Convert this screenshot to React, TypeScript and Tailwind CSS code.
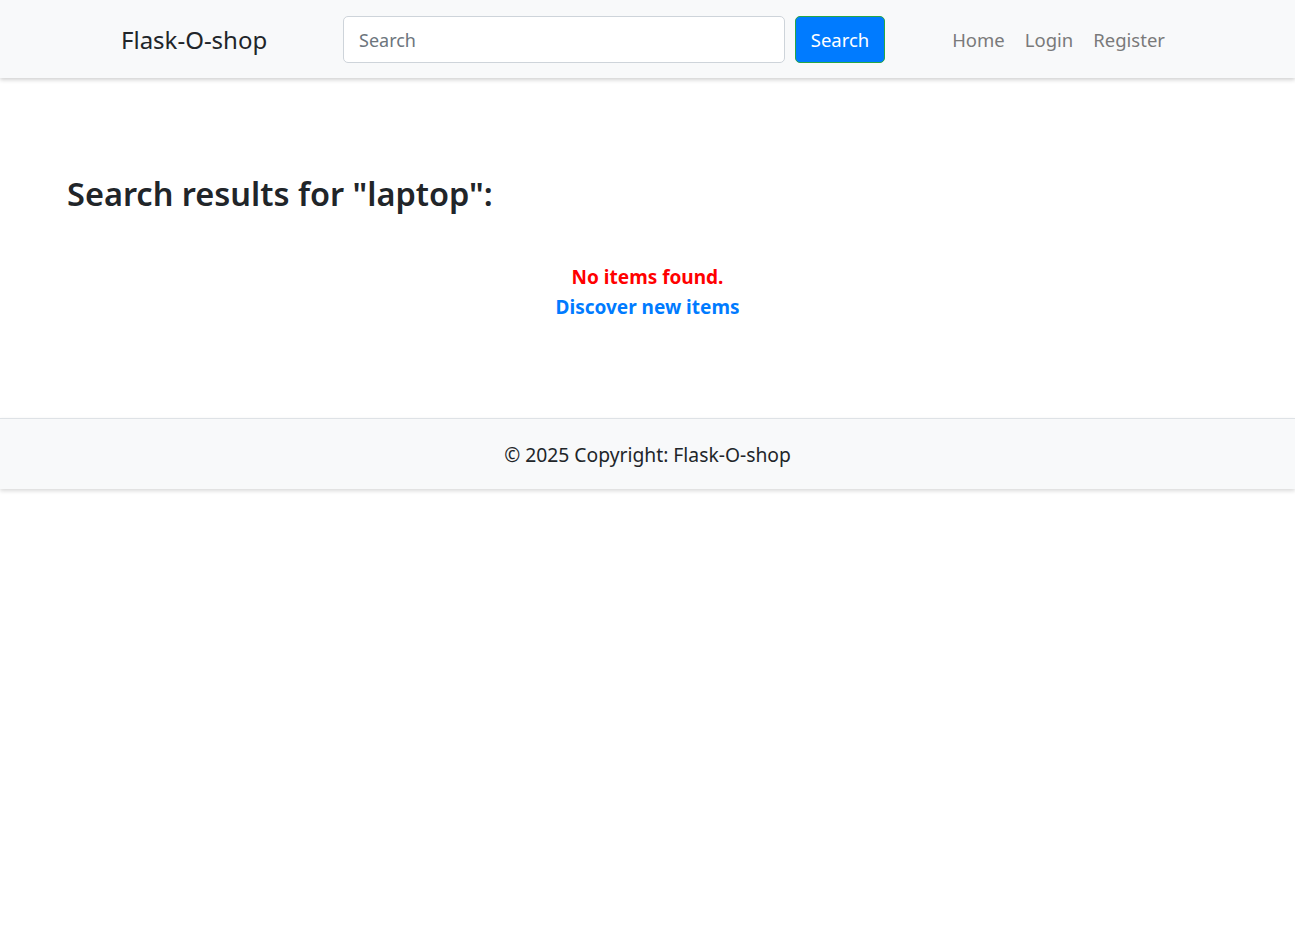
const App = () => {
    return (
        <div className="min-h-screen bg-white text-[#212529]" style={{ fontFamily: '"Noto Sans", "Open Sans", sans-serif' }}>
            <nav className="h-[78px] bg-[#f8f9fa] shadow-[0_2px_4px_rgba(0,0,0,0.18)] flex items-center">
                <div className="flex items-center w-full pl-[121px] pr-[130px]">
                    <a className="text-[24px] leading-[30px] pt-[2px] text-[#212529] w-[222px]" href="#">Flask-O-shop</a>
                    <div className="flex items-center gap-[10px]">
                        <input
                            className="w-[442px] h-[47px] px-[15px] pt-[2px] text-[18px] bg-white border border-[#ced4da] rounded-[5px] placeholder:text-[#6c757d] outline-none"
                            placeholder="Search"
                        />
                        <button className="h-[47px] w-[90px] pt-[2px] text-[18.5px] text-white bg-[#007bff] border border-[#28a745] rounded-[5px]">
                            Search
                        </button>
                    </div>
                    <ul className="ml-auto flex items-center gap-[20px] pt-[2px] text-[18.5px] text-[#7a7a7a]">
                        <li><a href="#">Home</a></li>
                        <li><a href="#">Login</a></li>
                        <li><a href="#">Register</a></li>
                    </ul>
                </div>
            </nav>

            <main className="px-[67px] pt-[96px] pb-[96px]">
                <h2 className="text-[32.5px] font-semibold leading-[1.2]">Search results for "laptop":</h2>
                <div className="mt-[49px] flex flex-col items-center text-[19px] font-bold leading-[30px]">
                    <p className="text-[#ff0000]">No items found.</p>
                    <a className="text-[#007bff]" href="#">Discover new items</a>
                </div>
            </main>

            <footer className="h-[71px] bg-[#f8f9fa] border-t border-[#dee2e6] shadow-[0_2px_4px_rgba(0,0,0,0.15)] flex items-center justify-center">
                <p className="text-[19.3px] pt-[2px]">© 2025 Copyright: Flask-O-shop</p>
            </footer>
        </div>
    );
};

export default App;
